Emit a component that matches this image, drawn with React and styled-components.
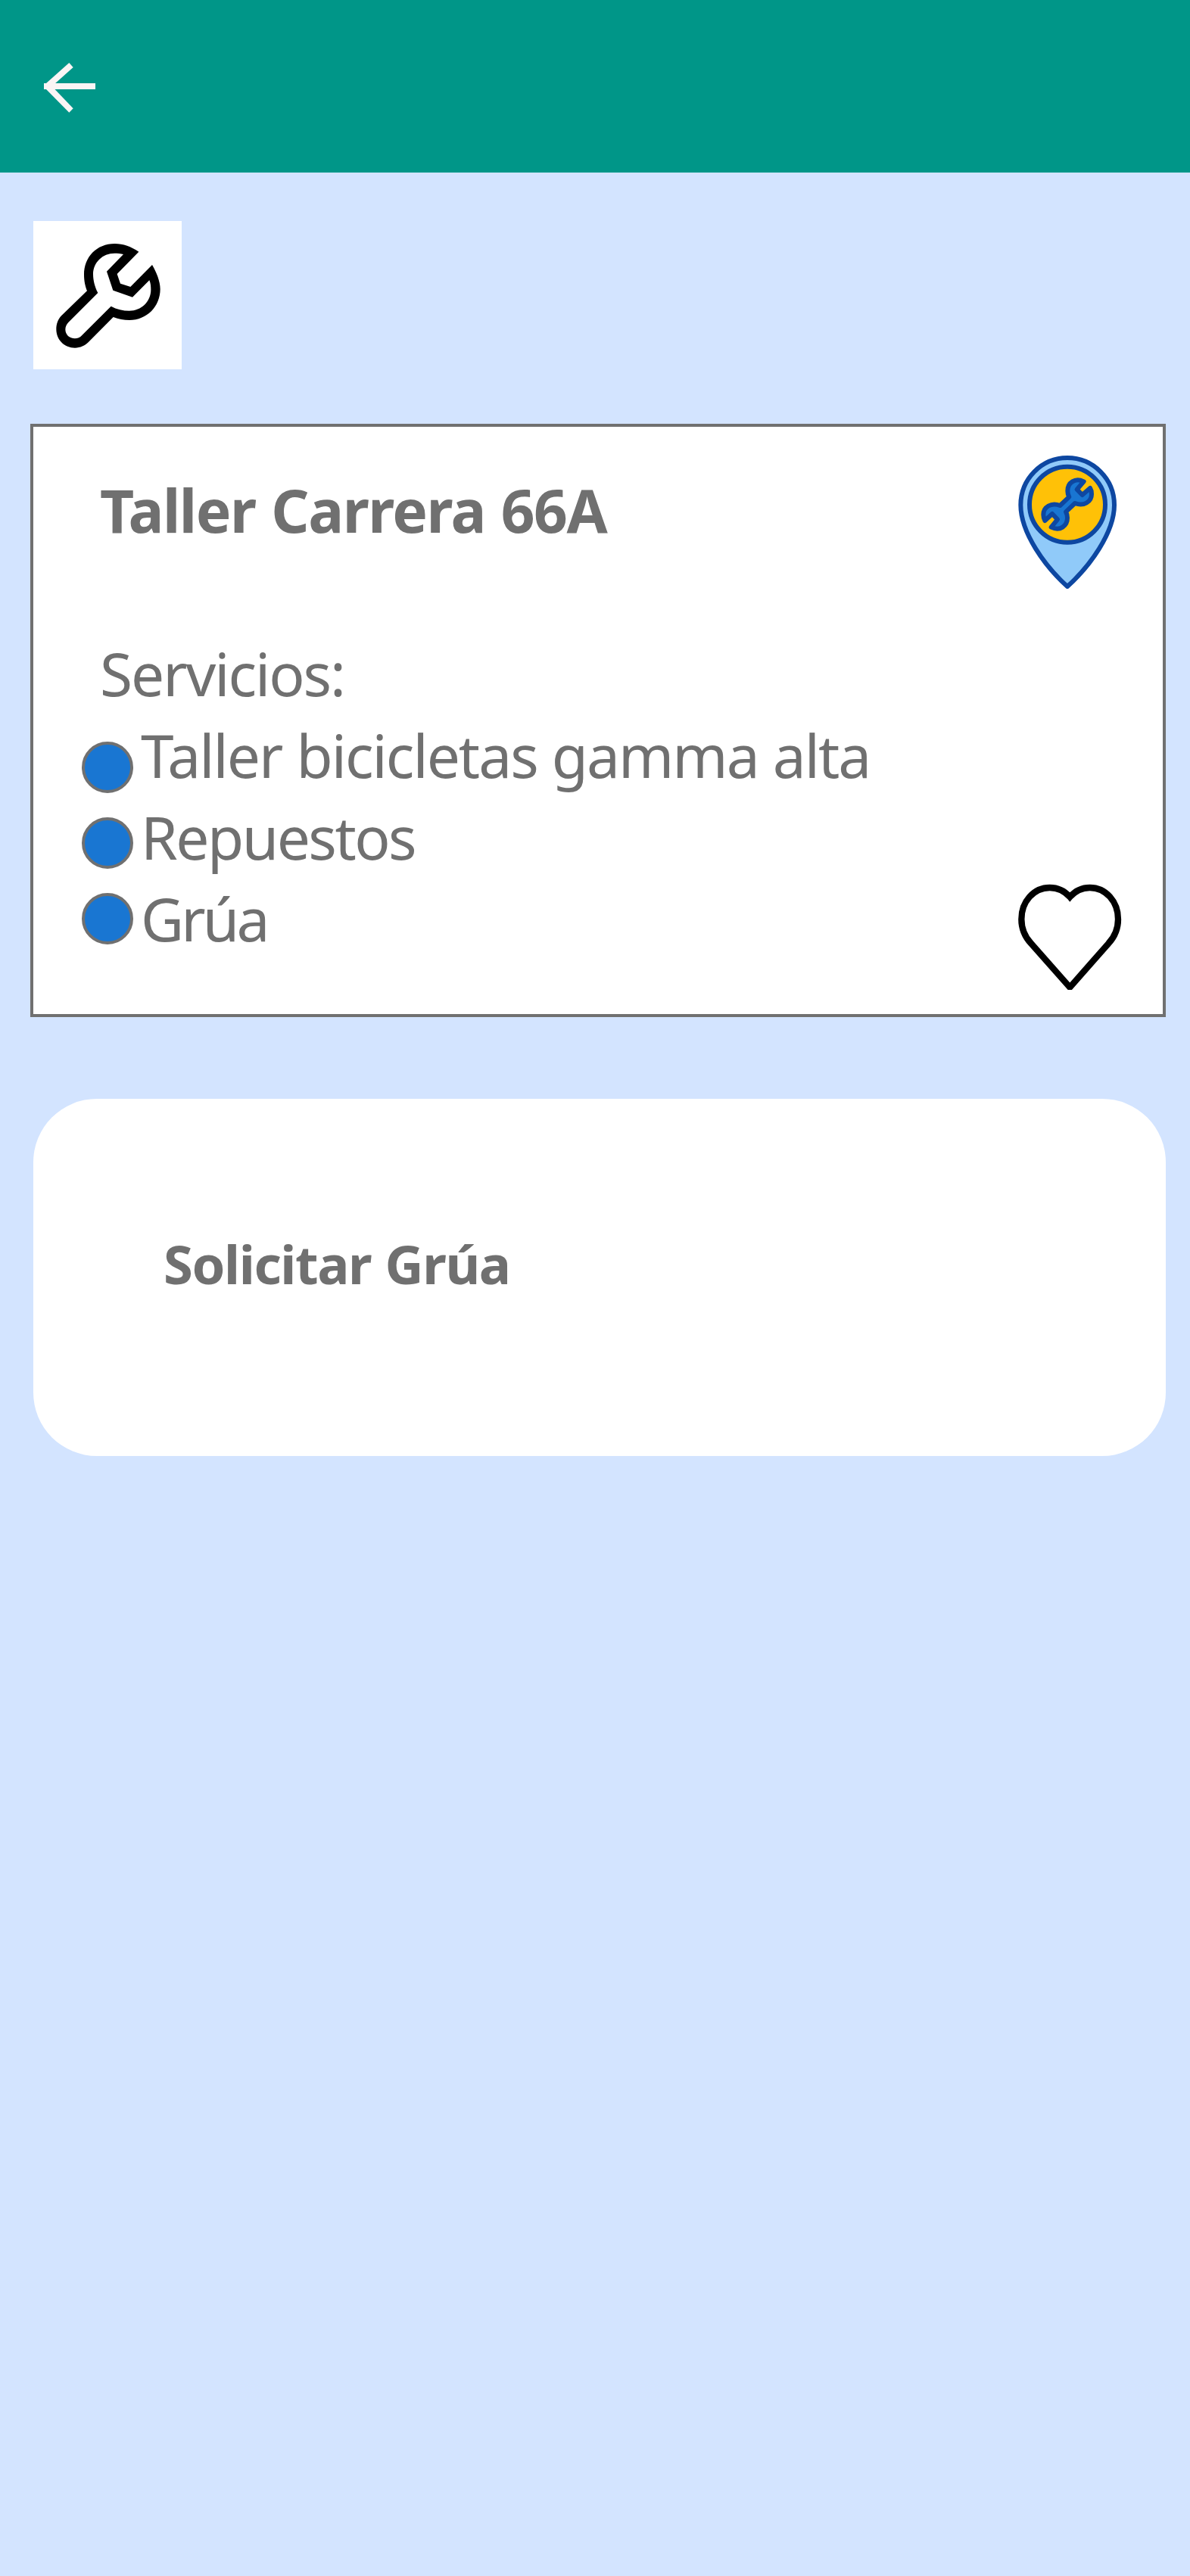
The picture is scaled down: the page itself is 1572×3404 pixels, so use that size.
import React from "react";
import styled, { createGlobalStyle } from "styled-components";

const GlobalStyle = createGlobalStyle`
  *, *::before, *::after { box-sizing: border-box; }
  body {
    margin: 0;
    background: #d3e4ff;
    color: #707070;
    font-family: "Noto Sans", "Open Sans", sans-serif;
  }
`;

const Screen = styled.div`
  display: flex;
  flex-direction: column;
  min-height: 3404px;
  background: #d3e4ff;
`;

const TopBar = styled.header`
  display: flex;
  align-items: flex-start;
  height: 228px;
  padding: 83px 0 0 58px;
  background: #009688;
`;

const BackButton = styled.button`
  display: flex;
  padding: 0;
  border: 0;
  background: none;
`;

const Icon = styled.svg`
  display: block;
  flex: none;
  width: ${({ $w }) => $w}px;
  height: ${({ $h }) => $h}px;
`;

const Content = styled.main`
  display: flex;
  flex-direction: column;
  padding: 64px 32px 0 40px;
`;

const CategoryTile = styled.div`
  width: 196px;
  height: 196px;
  margin-left: 4px;
  background: #fff;
`;

const WorkshopCard = styled.section`
  display: flex;
  justify-content: space-between;
  height: 784px;
  margin-top: 72px;
  padding: 0 54px 0 64px;
  border: 4px solid #707070;
  background: #fff;
`;

const Info = styled.div`
  display: flex;
  flex-direction: column;
  padding-top: 56px;
`;

const Line = styled.p`
  margin: 0;
  font-size: 78.4px;
  line-height: 108px;
  letter-spacing: ${({ $tracking }) => $tracking}px;
  word-spacing: 0.8px;
  white-space: nowrap;
`;

const Title = styled.h1`
  margin: 0 0 108px;
  padding-left: 24px;
  font-size: 78.4px;
  font-weight: 700;
  line-height: 108px;
  letter-spacing: -1.5px;
  word-spacing: 2px;
`;

const Label = styled(Line)`
  padding-left: 24px;
`;

const Services = styled.div`
  display: flex;
  gap: 10px;
`;

const Bullets = styled.div`
  display: flex;
  flex-direction: column;
  gap: 32px;
  padding-top: 36px;
`;

const Bullet = styled.span`
  width: 68px;
  height: 68px;
  border: 4px solid #707070;
  border-radius: 50%;
  background: #1976d2;
`;

const Side = styled.div`
  display: flex;
  flex-direction: column;
  justify-content: space-between;
  align-items: flex-start;
  width: 138px;
  padding: 38px 0 32px;
`;

const PinSlot = styled.div`
  padding-left: 1px;
`;

const ActionCard = styled.button`
  display: flex;
  align-items: flex-start;
  height: 472px;
  margin: 108px 0 0 4px;
  padding: 170px 0 0 172px;
  border: 0;
  border-radius: 84px;
  background: #fff;
  color: inherit;
  font-family: inherit;
  font-size: 70.5px;
  font-weight: 700;
  line-height: 97px;
  letter-spacing: -1.4px;
  word-spacing: 1.5px;
  text-align: left;
`;

const services = [
  { name: "Taller bicicletas gamma alta", tracking: -2 },
  { name: "Repuestos", tracking: -2.5 },
  { name: "Grúa", tracking: -3.8 },
];

function ArrowIcon() {
  return (
    <Icon $w={68} $h={66} viewBox="174 99 204 198" fill="#faf5f5">
      <path d="M174 180H378V204H174Z" />
      <path d="M274 99L290 117L206 192L183 180Z" />
      <path d="M274 296L290 280L206 192L183 204Z" />
    </Icon>
  );
}

function WrenchIcon() {
  return (
    <Icon $w={196} $h={196} viewBox="42 36 588 588">
      <path
        fillRule="evenodd"
        d="M460 158C430 138 398 126 365 126C292 126 243 180 243 248C243 275 248 295 255 313L153 412C140 425 133 445 133 465C133 507 165 539 207 539C228 539 247 530 260 517L359 417C380 425 400 429 423 429C492 429 545 375 545 306C545 275 530 240 513 210L427 297L387 284L374 246Z
        M399 168L333 236L358 311L435 338L502 271C507 283 508 295 508 308C508 355 470 392 422 392C398 392 372 386 350 374L235 489C227 498 218 502 207 502C185 502 169 487 169 466C169 455 174 446 181 438L298 321C285 297 279 270 279 247C279 200 317 164 364 164C376 164 388 165 399 168Z"
      />
    </Icon>
  );
}

function PinIcon() {
  return (
    <Icon $w={130} $h={176} viewBox="75 186 390 528" stroke="#0d47a1" strokeWidth="18" strokeLinejoin="round">
      <path
        fill="#90caf9"
        d="M270 195C167 195 85 279 85 382C85 492 181 625 270 705C359 625 456 492 456 382C456 279 373 195 270 195Z"
      />
      <circle cx="270" cy="380" r="150" fill="#ffc107" />
      <path
        fill="#1976d2"
        d="M335 289C300 272 271 294 271 326C271 337 274 345 277 350L241 384C206 370 175 390 175 420C175 430 177 438 181 444L210 417L231 439L206 470C241 487 270 465 270 433C270 422 267 414 264 409L300 375C335 389 366 369 366 339C366 329 364 321 360 315L329 342L308 320Z"
      />
    </Icon>
  );
}

function HeartIcon() {
  return (
    <Icon $w={138} $h={140} viewBox="72 84 414 420" fill="none" stroke="#000" strokeWidth="25">
      <path d="M280 136C259 112 230 99 200 99C137 99 88 154 88 224C88 264 103 295 126 320L280 494L433 320C456 295 471 264 471 224C471 154 422 99 359 99C329 99 301 112 280 136Z" />
    </Icon>
  );
}

export default function App() {
  return (
    <>
      <GlobalStyle />
      <Screen>
        <TopBar>
          <BackButton aria-label="Volver">
            <ArrowIcon />
          </BackButton>
        </TopBar>
        <Content>
          <CategoryTile>
            <WrenchIcon />
          </CategoryTile>
          <WorkshopCard>
            <Info>
              <Title>Taller Carrera 66A</Title>
              <Label $tracking={-2.05}>Servicios:</Label>
              <Services>
                <Bullets>
                  {services.map(({ name }) => (
                    <Bullet key={name} />
                  ))}
                </Bullets>
                <div>
                  {services.map(({ name, tracking }) => (
                    <Line key={name} $tracking={tracking}>
                      {name}
                    </Line>
                  ))}
                </div>
              </Services>
            </Info>
            <Side>
              <PinSlot>
                <PinIcon />
              </PinSlot>
              <HeartIcon />
            </Side>
          </WorkshopCard>
          <ActionCard>Solicitar Grúa</ActionCard>
        </Content>
      </Screen>
    </>
  );
}
